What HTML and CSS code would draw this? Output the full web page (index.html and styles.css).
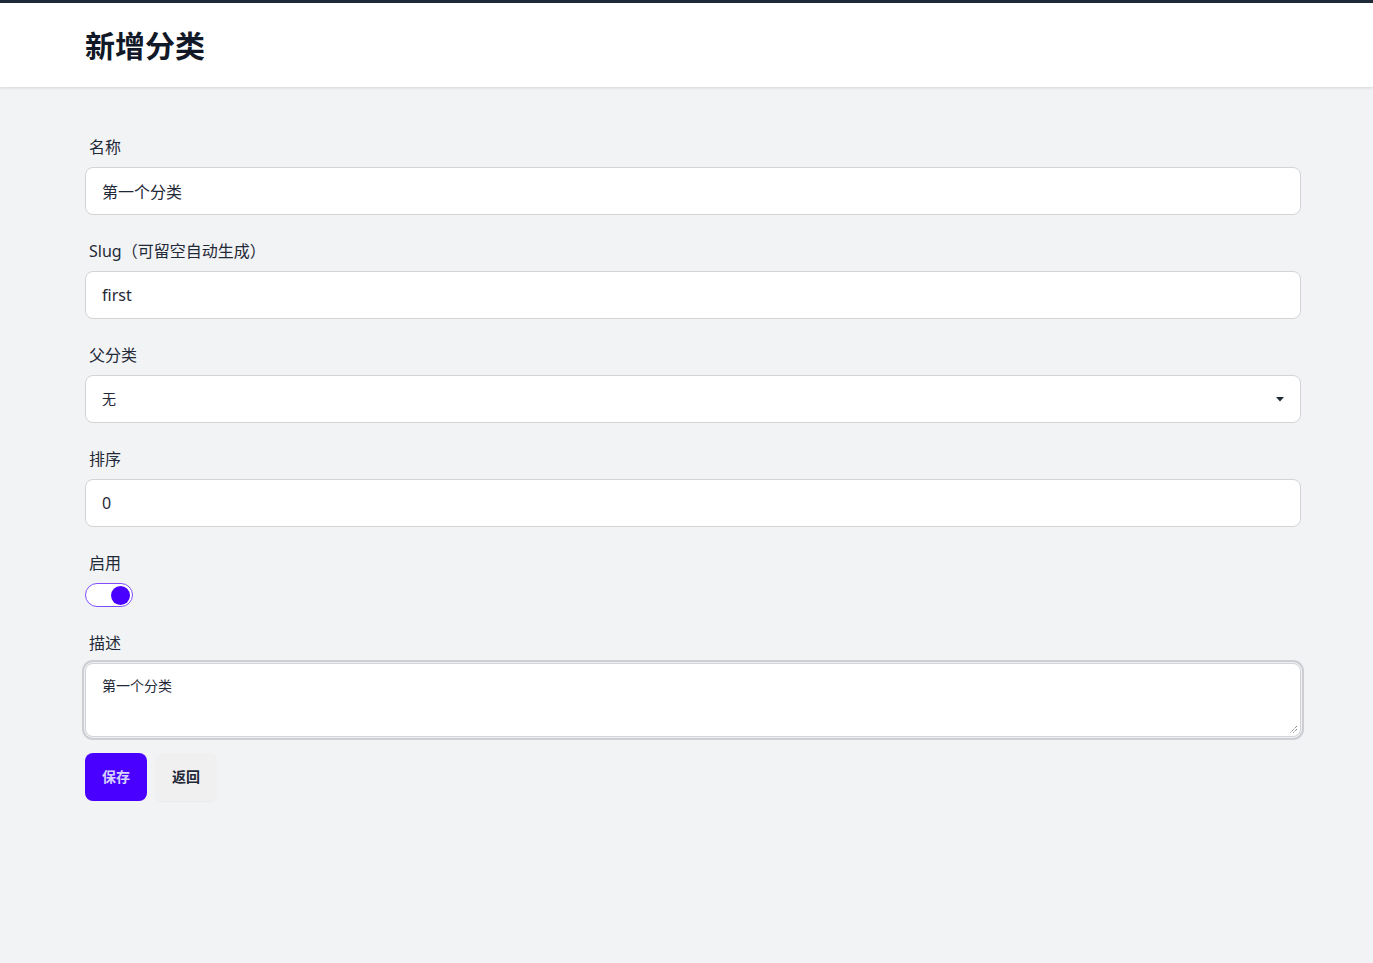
FILE: index.html
```html
<!DOCTYPE html>
<html lang="zh-CN">
<head>
<meta charset="utf-8">
<title>新增分类</title>
<link rel="stylesheet" href="styles.css">
</head>
<body>
<header class="topbar">
  <h1 class="title">新增分类</h1>
</header>
<main class="main">
  <form class="form">
    <div class="field">
      <label class="label">名称</label>
      <input class="input" type="text" value="第一个分类">
    </div>
    <div class="field">
      <label class="label">Slug（可留空自动生成）</label>
      <input class="input" type="text" value="first">
    </div>
    <div class="field">
      <label class="label">父分类</label>
      <div class="select">
        <span class="select-value">无</span>
        <svg class="caret" width="8" height="5" viewBox="0 0 8 5"><path d="M0 0H8L4 4.5Z" fill="#1f2937"/></svg>
      </div>
    </div>
    <div class="field">
      <label class="label">排序</label>
      <input class="input" type="text" value="0">
    </div>
    <div class="field">
      <label class="label">启用</label>
      <div class="toggle"><span class="knob"></span></div>
    </div>
    <div class="field">
      <label class="label">描述</label>
      <div class="textarea">第一个分类<svg class="grip" width="10" height="10" viewBox="0 0 10 10"><path d="M9 2L2 9M9 5L5 9" stroke="#555" stroke-width="1" stroke-dasharray="1 1"/></svg></div>
    </div>
    <div class="actions">
      <button type="button" class="btn btn-primary">保存</button>
      <button type="button" class="btn btn-ghost">返回</button>
    </div>
  </form>
</main>
</body>
</html>
```

FILE: styles.css
```css
* { box-sizing: border-box; }
html, body { margin: 0; padding: 0; }
body {
  background: #f2f3f5;
  font-family: "Noto Sans", "Noto Sans CJK SC", sans-serif;
  color: #1f2937;
  min-height: 963px;
}
.topbar {
  background: #fff;
  border-top: 3px solid #1f2937;
  height: 87px;
  box-shadow: 0 1px 3px rgba(0,0,0,0.12);
  display: flex;
  align-items: center;
  padding-left: 85px;
  position: relative;
  z-index: 1;
}
.title {
  margin: 0 0 2px 0;
  font-size: 30px;
  font-weight: 700;
  line-height: 36px;
  color: #111827;
  font-family: "Noto Sans CJK SC", sans-serif;
}
.main {
  padding: 40px 72px 0 85px;
}
.form {
  display: flex;
  flex-direction: column;
  gap: 16px;
}
.field { display: flex; flex-direction: column; }
.label {
  padding: 8px 4px;
  font-size: 16px;
  line-height: 24px;
  color: #1f2937;
}
.input, .select, .textarea {
  background: #fff;
  border: 1px solid #d4d4d8;
  border-radius: 8px;
  font-family: inherit;
  color: #1f2937;
}
.input {
  height: 48px;
  padding: 0 16px;
  font-size: 16px;
  outline: none;
  width: 100%;
}
.select {
  height: 48px;
  padding: 0 16px 2px 16px;
  display: flex;
  align-items: center;
  justify-content: space-between;
  font-size: 14px;
}
.caret { margin-top: 2px; }
.toggle {
  width: 48px;
  height: 24px;
  border: 1px solid #7f4dff;
  border-radius: 12px;
  background: #fff;
  display: flex;
  align-items: center;
  justify-content: flex-end;
  padding-right: 2px;
}
.knob {
  width: 19px;
  height: 19px;
  border-radius: 50%;
  background: #4a00ff;
}
.textarea {
  height: 74px;
  padding: 13px 16px;
  font-size: 14px;
  line-height: 18px;
  position: relative;
  box-shadow: 0 0 0 1px #eeeff2, 0 0 0 3px #cdced4;
}
.grip { position: absolute; right: 2px; bottom: 2px; }
.actions { display: flex; gap: 8px; }
.btn {
  height: 48px;
  padding: 0 16px 2px 16px;
  border-radius: 8px;
  font-size: 14px;
  font-weight: 700;
  font-family: "Noto Sans CJK SC", sans-serif;
  border: none;
  cursor: pointer;
}
.btn-primary { background: #4a00ff; color: #d6d2ff; width: 62px; }
.btn-ghost { background: #f0f0f1; color: #1f2937; width: 62px; box-shadow: 0 1px 2px rgba(0,0,0,0.04); }
```
